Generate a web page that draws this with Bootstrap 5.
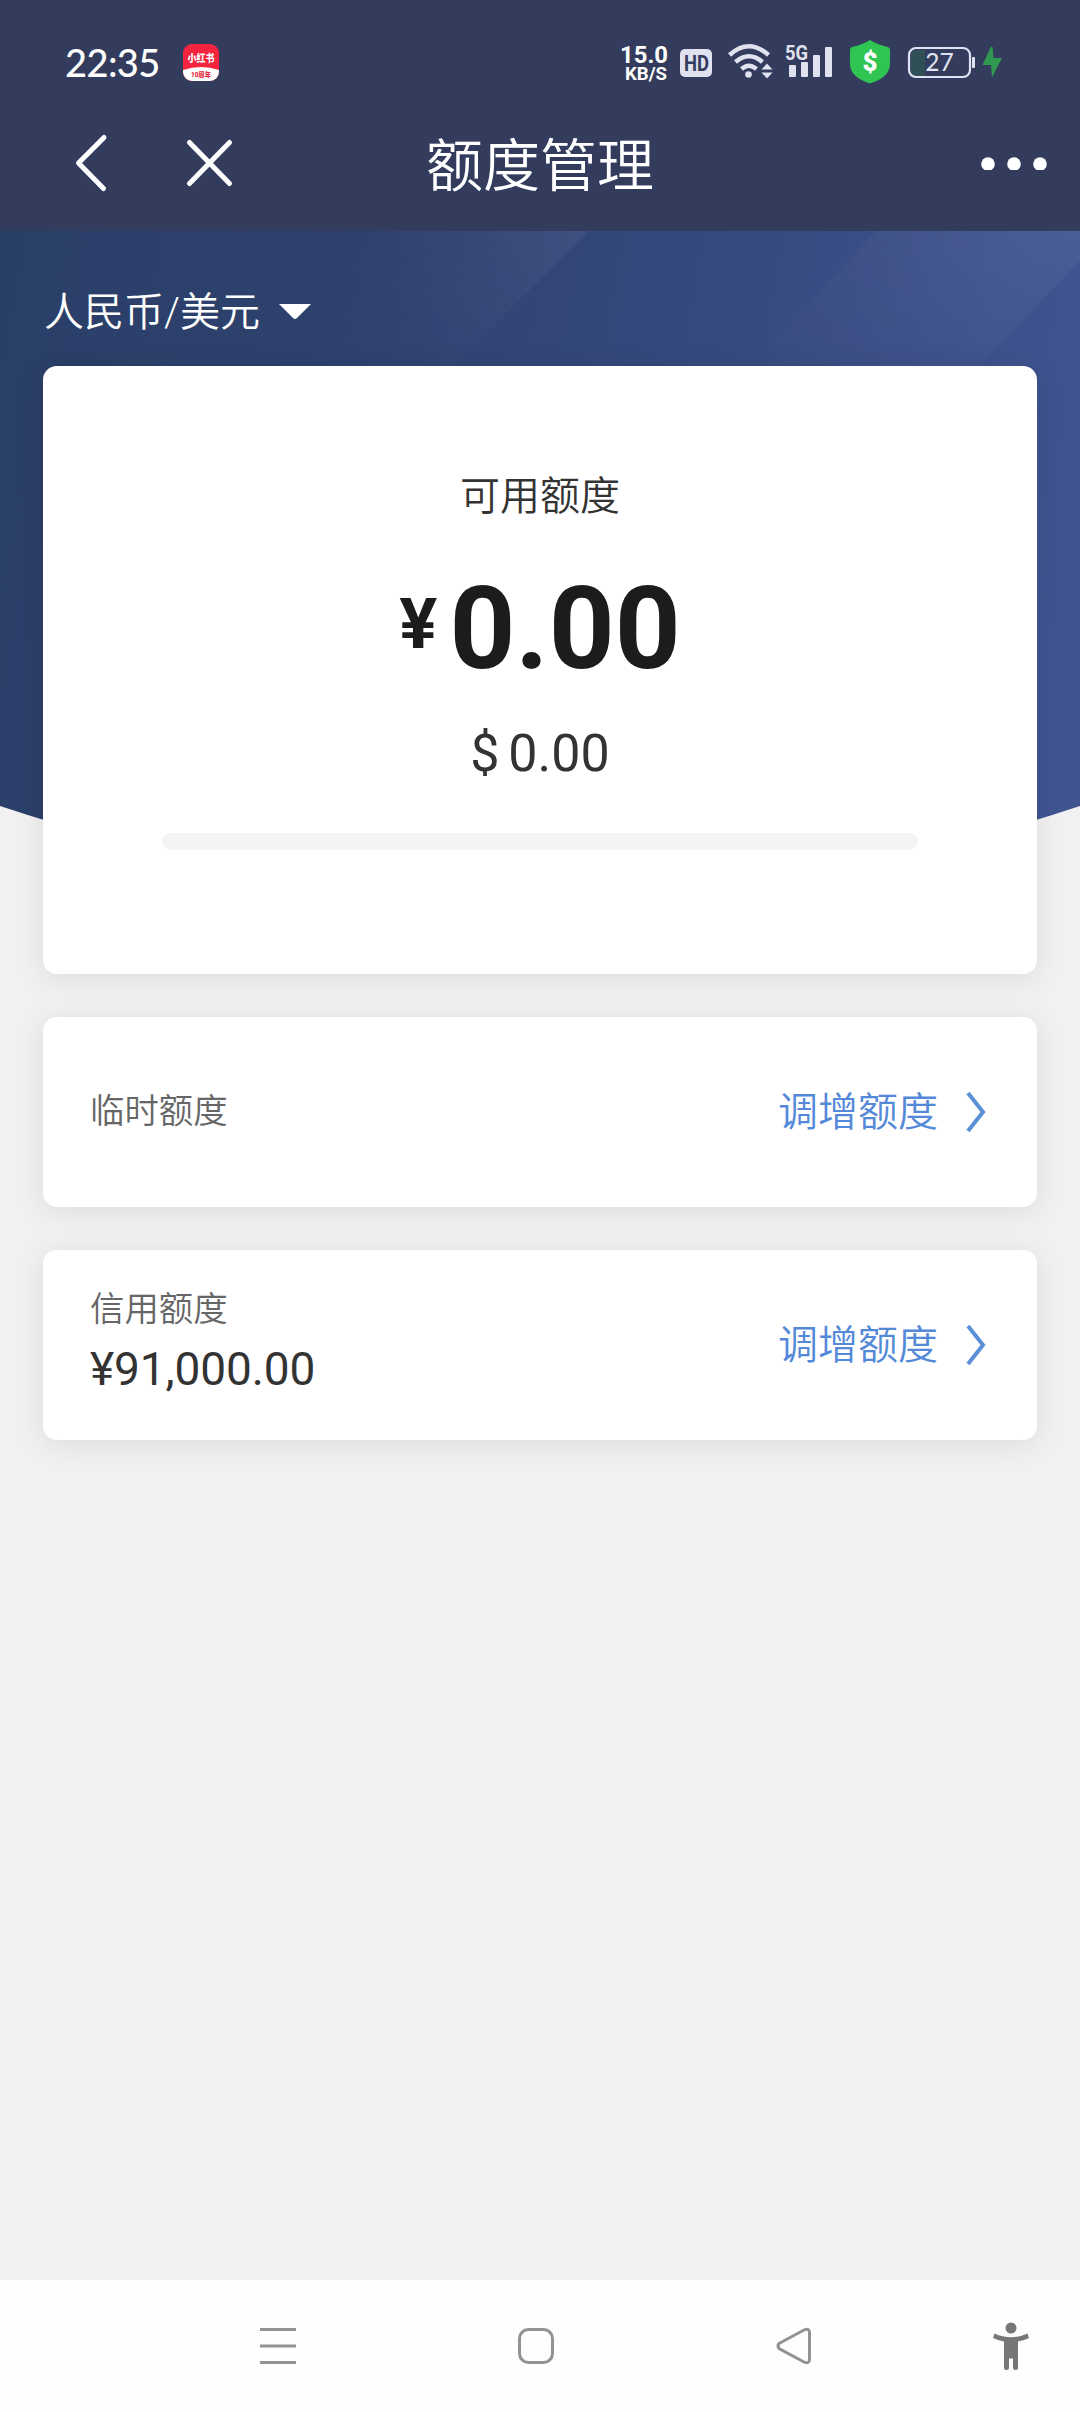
<!DOCTYPE html>
<html lang="zh-CN">
<head>
<meta charset="utf-8">
<meta name="viewport" content="width=device-width, initial-scale=1">
<title>额度管理</title>
<link href="https://cdn.jsdelivr.net/npm/bootstrap@5.3.0/dist/css/bootstrap.min.css" rel="stylesheet">
<style>
body{background:#f1f1f1;font-family:Roboto,"Noto Sans CJK SC",sans-serif;color:#333;line-height:1}
svg{display:block;flex:none}
.screen{width:1080px;height:2412px;overflow:hidden}
.topbar{background:#333c5c;height:231px}
.status-row{height:124px;padding-left:65px}
.clock{font:500 38px/48px Lato,sans-serif;width:118px;letter-spacing:-.6px}
.title-row{height:107px;padding-bottom:30px}
.page-title{font-size:57px;line-height:80px;font-weight:350;padding-top:8px}
.side{width:300px}
.hero-bg{top:0;left:0;z-index:-1}
.content{padding:0 43px;z-index:0}
.currency{height:135px;padding:62px 0 0 1px;font-size:40px;line-height:40px;font-weight:350;gap:19px}
.caret{margin-top:11px}
.panel{border:0;border-radius:14px;box-shadow:0 4px 30px rgba(0,0,0,.09)}
.balance{height:608px;padding-top:111px}
.caption-lg{font-size:40px;line-height:40px;font-weight:350}
.amount{height:84px;margin-top:70px;color:#1c1c1c;font-weight:700;gap:12px;line-height:84px}
.amount-sign{font-size:71px;line-height:74px}
.amount-num{font-size:115px}
.usd{font-size:52px;line-height:52px;margin-top:57px;word-spacing:-4px}
.meter{width:756px;height:17px;background:#f4f4f4;border-radius:9px;margin-top:53px}
.limit{height:190px;margin-top:43px;padding:0 51px 0 47px}
.limit-name{font-size:34.4px;line-height:36px;color:#666;font-weight:350;margin-top:-3px}
.limit-value{font-size:46px;line-height:50px;margin:17px 0 2px;letter-spacing:-.1px}
.adjust{color:#5488d8;font-size:40px;line-height:40px;gap:28px;font-weight:350}
.adjust span{padding-top:2px}
.bottom-nav{height:132px;background:#fefefe}
</style>
</head>
<body>
<div class="screen d-flex flex-column">
  <header class="topbar text-white">
    <div class="status-row d-flex align-items-center">
      <div class="clock">22:35</div>
      <svg width="36" height="37" viewBox="0 0 36 37"><defs><clipPath id="app"><rect width="36" height="37" rx="9"/></clipPath></defs><g clip-path="url(#app)"><path fill="#f5243e" d="M0 0h36v37H0z"/><path fill="#fff" d="M0 26Q18 20 36 26v11H0z"/></g><text x="18" y="17.500" font-size="10" font-weight="900" text-anchor="middle" fill="#fff" textLength="27" lengthAdjust="spacingAndGlyphs">小红书</text><text x="18" y="32.500" font-size="6.500" font-weight="900" text-anchor="middle" fill="#e52b42" textLength="20" lengthAdjust="spacingAndGlyphs">10周年</text></svg>
      <svg class="ms-auto" width="480" height="60" viewBox="600 32 480 60" fill="#e0e3ef">
        <g fill="#fff" font-weight="700"><text x="620" y="62.500" font-size="24" textLength="48" lengthAdjust="spacingAndGlyphs">15.0</text><text x="625" y="80" font-size="18" textLength="42" lengthAdjust="spacingAndGlyphs">KB/S</text></g>
        <rect x="680" y="49" width="32" height="28" rx="5"/><text x="684" y="71" font-size="22" font-weight="700" fill="#333c5c" textLength="25" lengthAdjust="spacingAndGlyphs">HD</text>
        <g fill="none" stroke="#e0e3ef" stroke-width="4.500"><path d="M729.500 55Q749 37.500 768.500 55M735.500 62Q749 50.500 762.500 62M741.500 69Q749 62.500 756.500 69"/></g><circle cx="748.500" cy="74.500" r="3.300"/><path d="M761.500 69.500l5.500-6 5.500 6zM761.500 72.500h11l-5.500 6z"/>
        <text x="785" y="60" font-size="20" font-weight="700" textLength="23" lengthAdjust="spacingAndGlyphs">5G</text>
        <rect x="789" y="65" width="7" height="12" rx="1"/><rect x="801" y="62" width="7" height="15" rx="1"/><rect x="813" y="55" width="7" height="22" rx="1"/><rect x="825" y="47" width="7" height="30" rx="1"/>
        <path fill="#30c453" d="M870 40q8 5 18 7 2 1 2 3v14q0 13-20 19.500Q850 77 850 64V50q0-2 2-3 10-2 18-7z"/><text x="870" y="71" text-anchor="middle" font-size="26" font-weight="900" fill="#fff">$</text>
        <path fill="#305058" d="M911 50h14v26h-14z"/><rect x="909" y="48" width="61" height="29" rx="7" fill="none" stroke="#e0e3f5" stroke-width="2.200"/><rect x="972" y="57" width="3" height="11" rx="1"/><text x="939.500" y="71" text-anchor="middle" font-family="Lato" font-size="24.500">27</text>
        <path fill="#309850" d="M991 46.500 982.500 65h8.500l1 12.500L1002 58h-8.500l-1-11z"/>
      </svg>
    </div>
    <div class="title-row d-flex align-items-center justify-content-between">
      <div class="side d-flex"><svg width="240" height="60" viewBox="0 132 240 60" fill="none" stroke="#fff" stroke-width="5" stroke-linecap="round" stroke-linejoin="round"><path d="M104 136.500 78.500 162l25 25.500M189.500 141.500l40 41M229.500 141.500l-40 41"/></svg></div>
      <div class="page-title">额度管理</div>
      <div class="side d-flex justify-content-end"><svg width="99" height="14" viewBox="981 155 99 14" fill="#fff"><circle cx="988" cy="163" r="6.800"/><circle cx="1014" cy="163" r="6.800"/><circle cx="1040" cy="163" r="6.800"/></svg></div>
    </div>
  </header>
  <main class="content position-relative flex-grow-1">
    <svg class="hero-bg position-absolute" width="1080" height="670" viewBox="0 231 1080 670">
      <defs>
        <linearGradient id="sky" gradientUnits="userSpaceOnUse" x1="0" y1="400" x2="1080" y2="600"><stop offset="0" stop-color="#2a3f68"/><stop offset=".35" stop-color="#2f4270"/><stop offset="1" stop-color="#405492"/></linearGradient>
        <linearGradient id="ray1" gradientUnits="userSpaceOnUse" x1="370" y1="200" x2="555" y2="300"><stop offset="0" stop-color="#fff" stop-opacity="0"/><stop offset="1" stop-color="#fff" stop-opacity=".06"/></linearGradient>
        <linearGradient id="ray2" gradientUnits="userSpaceOnUse" x1="810" y1="260" x2="1040" y2="400"><stop offset="0" stop-color="#fff" stop-opacity=".025"/><stop offset=".7" stop-color="#fff" stop-opacity=".065"/></linearGradient>
        <linearGradient id="fade" x1="0" y1="0" x2="0" y2="1"><stop stop-color="#fff"/><stop offset="1" stop-color="#fff" stop-opacity=".1"/></linearGradient><mask id="soft"><path fill="url(#fade)" d="M0 231h1080v160H0z"/></mask>
      </defs>
      <path fill="url(#sky)" d="M0 231h1080v575Q540 986 0 806z"/>
      <g mask="url(#soft)"><path fill="url(#ray1)" d="M330 231h258L430 391H170z"/><path fill="url(#ray2)" d="M876 231h204v30L955 391H725z"/></g>
    </svg>
    <div class="currency d-flex text-white"><span>人民币/美元</span><svg class="caret" width="32" height="16" viewBox="0 0 32 16"><path fill="#fff" d="M0 0h32L18 14q-2 2-4 0z"/></svg></div>
    <section class="card panel balance align-items-center">
      <div class="caption-lg">可用额度</div>
      <div class="amount d-flex"><span class="amount-sign">¥</span><span class="amount-num">0.00</span></div>
      <div class="usd">$ 0.00</div>
      <div class="meter"></div>
    </section>
    <section class="card panel limit flex-row align-items-center justify-content-between">
      <div class="limit-name">临时额度</div>
      <a class="adjust d-flex align-items-center text-decoration-none" href="#"><span>调增额度</span><svg width="20" height="42" viewBox="0 0 20 42" fill="none" stroke="#5b8fd6" stroke-width="4"><path d="M2 2l15 19L2 40"/></svg></a>
    </section>
    <section class="card panel limit flex-row align-items-center justify-content-between">
      <div><div class="limit-name">信用额度</div><div class="limit-value">¥91,000.00</div></div>
      <a class="adjust d-flex align-items-center text-decoration-none" href="#"><span>调增额度</span><svg width="20" height="42" viewBox="0 0 20 42" fill="none" stroke="#5b8fd6" stroke-width="4"><path d="M2 2l15 19L2 40"/></svg></a>
    </section>
  </main>
  <nav class="bottom-nav"><svg width="1080" height="132" viewBox="0 2280 1080 132" fill="none" stroke="#929292" stroke-width="3"><path d="M260 2329.500h36M260 2346h36M260 2362.500h36"/><rect x="519.500" y="2329.500" width="33" height="33" rx="9"/><path d="M779 2343.500 804 2330q5.500-2.500 5.500 3v26q0 5.500-5.500 3L779 2348.500q-2-2.500 0-5z"/><g fill="#777" stroke="none"><circle cx="1011" cy="2328" r="5.500"/><path d="M994.500 2333.500Q1011 2341 1027.500 2333.500L1029 2338Q1023 2341 1018 2341.500V2368q0 2-2.500 2t-2.500-2v-9.500h-4V2368q0 2-2.500 2t-2.500-2v-26.500Q999 2341 993 2338z"/></g></svg></nav>
</div>
<script src="https://cdn.jsdelivr.net/npm/bootstrap@5.3.0/dist/js/bootstrap.bundle.min.js"></script>
</body>
</html>
